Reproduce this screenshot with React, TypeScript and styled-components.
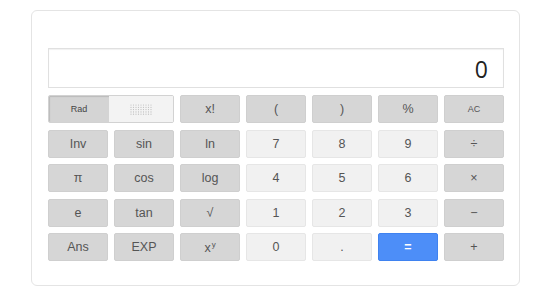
import React from 'react'
import styled, { createGlobalStyle } from 'styled-components'

const Global = createGlobalStyle`
  html, body { margin: 0; padding: 0; background: #fff; }
  body { font-family: Arial, "Liberation Sans", sans-serif; }
`

type Tone = 'dark' | 'light' | 'blue'

const Page = styled.div`
  width: 540px;
  height: 292px;
  padding: 10px 0 0 31px;
  box-sizing: border-box;
`

const Card = styled.div`
  width: 489px;
  height: 276px;
  box-sizing: border-box;
  border: 1px solid #e4e4e4;
  border-radius: 6px;
  padding: 37px 15px 0 16px;
`

const Display = styled.div`
  height: 40px;
  width: 456px;
  box-sizing: border-box;
  border: 1px solid #e0e0e0;
  box-shadow: inset 0 1px 1px rgba(0,0,0,0.06);
  display: flex;
  align-items: center;
  justify-content: flex-end;
  padding: 2px 15px 0 0;
  font-family: "Open Sans", "Liberation Sans", sans-serif;
  font-size: 23px;
  color: #222;
  margin-bottom: 7px;
`

const Keys = styled.div`
  display: grid;
  grid-template-columns: repeat(7, 60px);
  grid-template-rows: repeat(5, 28px);
  column-gap: 6px;
  row-gap: 6.5px;
`

const tones = {
  dark: { bg: '#d6d6d6', border: '#cfcfcf', color: '#555' },
  light: { bg: '#f1f1f1', border: '#e6e6e6', color: '#555' },
  blue: { bg: '#4d8ef8', border: '#3f82f0', color: '#fff' },
}

const Key = styled.div<{ $tone: Tone; $small?: boolean }>`
  display: flex;
  align-items: center;
  justify-content: center;
  box-sizing: border-box;
  border: 1px solid ${p => tones[p.$tone].border};
  border-radius: 2px;
  background: ${p => tones[p.$tone].bg};
  color: ${p => tones[p.$tone].color};
  font-size: ${p => (p.$small ? '9px' : '12.5px')};
  font-weight: ${p => (p.$tone === 'blue' ? 'bold' : 'normal')};
`

const Power = styled.span`
  sup { font-size: 8px; margin-left: 1px; vertical-align: 5px; }
`

const Toggle = styled.div`
  grid-column: span 2;
  display: flex;
  box-sizing: border-box;
  border: 1px solid #d2d2d2;
  border-radius: 2px;
  overflow: hidden;
`

const Seg = styled.div<{ $active?: boolean }>`
  flex: ${p => (p.$active ? '0 0 60px' : '1')};
  display: flex;
  align-items: center;
  justify-content: center;
  background: ${p => (p.$active ? '#d4d4d4' : '#f3f3f3')};
  box-shadow: ${p => (p.$active ? 'inset 1px 1px 1px rgba(0,0,0,0.12)' : 'none')};
  color: #444;
  font-size: 9px;
`

const DotGrid: React.FC = () => {
  const dots = []
  for (let r = 0; r < 5; r++)
    for (let c = 0; c < 9; c++)
      dots.push(<circle key={`${r}-${c}`} cx={1 + c * 2.5} cy={1 + r * 2.3} r={0.6} fill="#bdbdbd" />)
  return <svg width="22" height="11" viewBox="0 0 22 11">{dots}</svg>
}

type K = [React.ReactNode, Tone, boolean?]

const rows: K[][] = [
  [['x!', 'dark'], ['(', 'dark'], [')', 'dark'], ['%', 'dark'], ['AC', 'dark', true]],
  [['Inv', 'dark'], ['sin', 'dark'], ['ln', 'dark'], ['7', 'light'], ['8', 'light'], ['9', 'light'], ['÷', 'dark']],
  [['π', 'dark'], ['cos', 'dark'], ['log', 'dark'], ['4', 'light'], ['5', 'light'], ['6', 'light'], ['×', 'dark']],
  [['e', 'dark'], ['tan', 'dark'], ['√', 'dark'], ['1', 'light'], ['2', 'light'], ['3', 'light'], ['−', 'dark']],
  [['Ans', 'dark'], ['EXP', 'dark'], [<Power>x<sup>y</sup></Power>, 'dark'], ['0', 'light'], ['.', 'light'], ['=', 'blue'], ['+', 'dark']],
]

const App: React.FC = () => (
  <Page>
    <Global />
    <Card>
      <Display>0</Display>
      <Keys>
        <Toggle>
          <Seg $active>Rad</Seg>
          <Seg><DotGrid /></Seg>
        </Toggle>
        {rows.flat().map(([label, tone, small], i) => (
          <Key key={i} $tone={tone} $small={small}>{label}</Key>
        ))}
      </Keys>
    </Card>
  </Page>
)

export default App
